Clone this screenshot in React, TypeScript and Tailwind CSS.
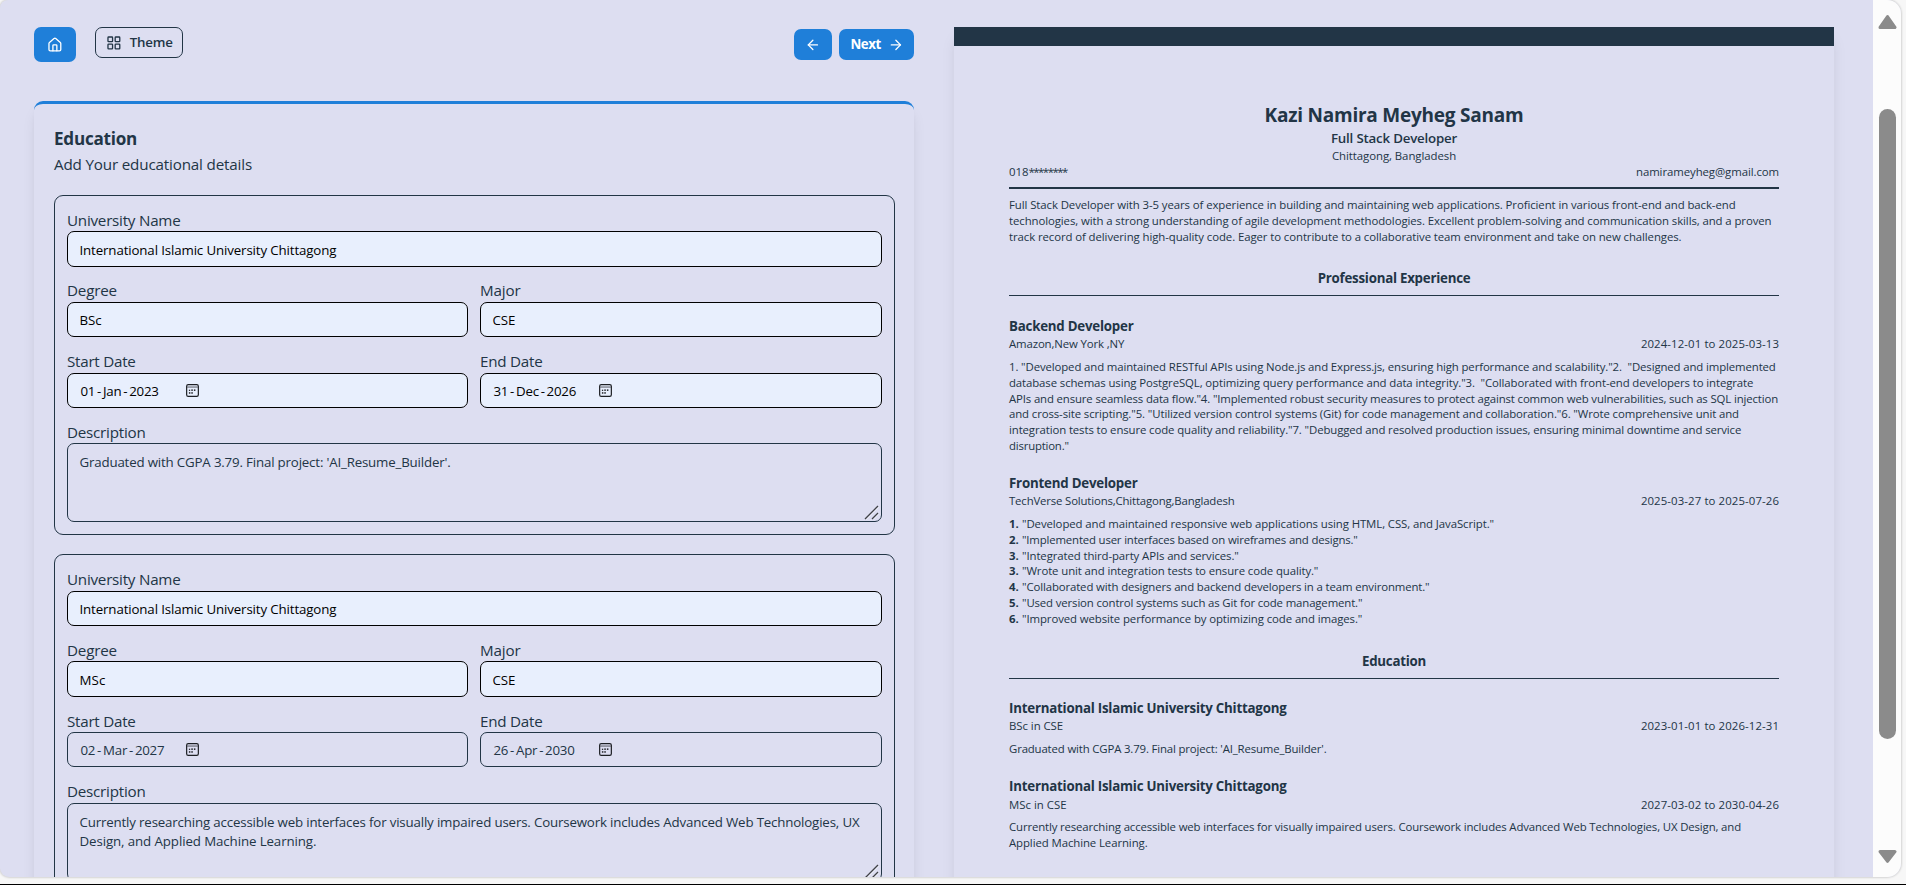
import type { ReactNode } from "react";
import { ArrowLeft, ArrowRight, House, LayoutGrid } from "lucide-react";

type Line = { text: string; tracking: string; number?: string };

type FieldValue = { text: string; tracking: string };

type DateValue = { day: string; month: string; year: string };

type EducationEntry = {
  university: FieldValue;
  degree: FieldValue;
  major: FieldValue;
  start: DateValue;
  end: DateValue;
  autofilledDates: boolean;
  description: Line[];
};

const university: FieldValue = {
  text: "International Islamic University Chittagong",
  tracking: "tracking-[-0.13px]",
};

const entries: EducationEntry[] = [
  {
    university,
    degree: { text: "BSc", tracking: "tracking-[-0.1px]" },
    major: { text: "CSE", tracking: "tracking-[-0.1px]" },
    start: { day: "01", month: "Jan", year: "2023" },
    end: { day: "31", month: "Dec", year: "2026" },
    autofilledDates: true,
    description: [
      {
        text: "Graduated with CGPA 3.79. Final project: 'AI_Resume_Builder'.",
        tracking: "tracking-[-0.175px]",
      },
    ],
  },
  {
    university,
    degree: { text: "MSc", tracking: "tracking-[0.1px]" },
    major: { text: "CSE", tracking: "tracking-[-0.1px]" },
    start: { day: "02", month: "Mar", year: "2027" },
    end: { day: "26", month: "Apr", year: "2030" },
    autofilledDates: false,
    description: [
      {
        text: "Currently researching accessible web interfaces for visually impaired users. Coursework includes Advanced Web Technologies, UX",
        tracking: "tracking-[-0.167px]",
      },
      { text: "Design, and Applied Machine Learning.", tracking: "tracking-[-0.1px]" },
    ],
  },
];

const summary: Line[] = [
  {
    text: "Full Stack Developer with 3-5 years of experience in building and maintaining web applications. Proficient in various front-end and back-end",
    tracking: "tracking-[-0.086px]",
  },
  {
    text: "technologies, with a strong understanding of agile development methodologies. Excellent problem-solving and communication skills, and a proven",
    tracking: "tracking-[-0.09px]",
  },
  {
    text: "track record of delivering high-quality code. Eager to contribute to a collaborative team environment and take on new challenges.",
    tracking: "tracking-[-0.088px]",
  },
];

const backendWork: Line[] = [
  {
    text: '1. "Developed and maintained RESTful APIs using Node.js and Express.js, ensuring high performance and scalability."2.  "Designed and implemented',
    tracking: "tracking-[-0.122px]",
  },
  {
    text: 'database schemas using PostgreSQL, optimizing query performance and data integrity."3.  "Collaborated with front-end developers to integrate',
    tracking: "tracking-[-0.107px]",
  },
  {
    text: 'APIs and ensure seamless data flow."4. "Implemented robust security measures to protect against common web vulnerabilities, such as SQL injection',
    tracking: "tracking-[-0.143px]",
  },
  {
    text: 'and cross-site scripting."5. "Utilized version control systems (Git) for code management and collaboration."6. "Wrote comprehensive unit and',
    tracking: "tracking-[-0.108px]",
  },
  {
    text: 'integration tests to ensure code quality and reliability."7. "Debugged and resolved production issues, ensuring minimal downtime and service',
    tracking: "tracking-[-0.111px]",
  },
  { text: 'disruption."', tracking: "tracking-[-0.2px]" },
];

const frontendWork: Line[] = [
  {
    number: "1.",
    text: '"Developed and maintained responsive web applications using HTML, CSS, and JavaScript."',
    tracking: "tracking-[-0.09px]",
  },
  {
    number: "2.",
    text: '"Implemented user interfaces based on wireframes and designs."',
    tracking: "tracking-[-0.173px]",
  },
  { number: "3.", text: '"Integrated third-party APIs and services."', tracking: "tracking-[-0.107px]" },
  {
    number: "3.",
    text: '"Wrote unit and integration tests to ensure code quality."',
    tracking: "tracking-[-0.103px]",
  },
  {
    number: "4.",
    text: '"Collaborated with designers and backend developers in a team environment."',
    tracking: "tracking-[-0.127px]",
  },
  {
    number: "5.",
    text: '"Used version control systems such as Git for code management."',
    tracking: "tracking-[-0.138px]",
  },
  {
    number: "6.",
    text: '"Improved website performance by optimizing code and images."',
    tracking: "tracking-[-0.094px]",
  },
];

function CalendarIcon() {
  return (
    <svg width="13" height="13" viewBox="0 0 13 13" fill="none" className="shrink-0">
      <rect x="0.65" y="0.65" width="11.7" height="11.7" rx="1.6" stroke="#1d1f24" strokeWidth="1.2" />
      <rect x="1.2" y="2.4" width="10.6" height="1.3" fill="#1d1f24" fillOpacity="0.55" />
      <g fill="#1d1f24">
        <rect x="5.3" y="5.4" width="1.5" height="1.5" />
        <rect x="7.9" y="5.4" width="1.5" height="1.5" />
        <rect x="2.9" y="5.7" width="1.3" height="1.2" />
        <rect x="2.9" y="8.2" width="1.5" height="1.5" />
        <rect x="5.3" y="8.2" width="1.5" height="1.5" />
      </g>
    </svg>
  );
}

function ResizeGrip() {
  return (
    <svg
      width="15"
      height="15"
      viewBox="0 0 15 15"
      fill="none"
      className="absolute right-0.5 bottom-px"
    >
      <path d="M2.2 14.4 14.6 2M9 14.4l5.6-5.6" stroke="#ffffff" strokeOpacity="0.7" strokeWidth="1" />
      <path d="M1 14 14 1M8 14l6-6" stroke="#3f4146" strokeWidth="1.3" />
    </svg>
  );
}

function Field({ label, tracking, children }: { label: string; tracking: string; children: ReactNode }) {
  return (
    <div>
      <div
        className={`flex h-[23.6px] items-center pt-[2px] text-[15.2px] leading-none whitespace-nowrap ${tracking}`}
      >
        {label}
      </div>
      {children}
    </div>
  );
}

function TextInput({ value }: { value: FieldValue }) {
  return (
    <div
      className={`flex h-[35.4px] items-center rounded-[7px] border border-black bg-[#e8effd] px-[11.5px] pt-[3px] text-[13.3px] leading-none whitespace-nowrap text-black ${value.tracking}`}
    >
      {value.text}
    </div>
  );
}

function DateInput({ value, autofilled }: { value: DateValue; autofilled: boolean }) {
  return (
    <div
      className={`flex h-[35.4px] items-center rounded-[7px] border px-[11px] text-[13.3px] leading-none ${
        autofilled ? "border-black bg-[#e8effd] text-black" : "border-[#223546]"
      }`}
    >
      <div className="flex w-[107px] pt-[2px] pl-[1.5px] tracking-[-0.25px]">
        <span>{value.day}</span>
        <span className="px-[1.9px]">-</span>
        <span>{value.month}</span>
        <span className="px-[1.9px]">-</span>
        <span>{value.year}</span>
      </div>
      <CalendarIcon />
    </div>
  );
}

function EntryForm({ entry }: { entry: EducationEntry }) {
  return (
    <div className="flex h-[339.95px] flex-col gap-[11.75px] rounded-[9px] border border-[#223546] px-[12px] pt-[11.7px]">
      <Field label="University Name" tracking="tracking-[-0.24px]">
        <TextInput value={entry.university} />
      </Field>
      <div className="grid grid-cols-[401px_402px] gap-x-3">
        <Field label="Degree" tracking="tracking-[-0.2px]">
          <TextInput value={entry.degree} />
        </Field>
        <Field label="Major" tracking="tracking-[-0.15px]">
          <TextInput value={entry.major} />
        </Field>
      </div>
      <div className="grid grid-cols-[401px_402px] gap-x-3">
        <Field label="Start Date" tracking="tracking-[-0.26px]">
          <DateInput value={entry.start} autofilled={entry.autofilledDates} />
        </Field>
        <Field label="End Date" tracking="tracking-[-0.23px]">
          <DateInput value={entry.end} autofilled={entry.autofilledDates} />
        </Field>
      </div>
      <Field label="Description" tracking="tracking-[-0.24px]">
        <div className="relative h-[78.7px] rounded-[7px] border border-[#223546] px-[11.5px] pt-[9px] text-[13.3px] leading-[19.3px]">
          {entry.description.map((line) => (
            <div key={line.text} className={`whitespace-pre ${line.tracking}`}>
              {line.text}
            </div>
          ))}
          <ResizeGrip />
        </div>
      </Field>
    </div>
  );
}

function Lines({ lines }: { lines: Line[] }) {
  return (
    <div className="leading-[15.83px]">
      {lines.map((line) => (
        <div key={line.text} className="flex whitespace-pre">
          {line.number && <span className="w-[13px] font-bold">{line.number}</span>}
          <span className={line.tracking}>{line.text}</span>
        </div>
      ))}
    </div>
  );
}

function SectionTitle({ title, spacing }: { title: string; spacing: string }) {
  return (
    <div className={`border-b border-[#223546] pb-[7px] text-center ${spacing}`}>
      <div className="h-5 text-[13.3px] leading-5 font-bold tracking-[-0.24px]">{title}</div>
    </div>
  );
}

function ResumeItem(props: {
  title: string;
  titleTracking: string;
  place: string;
  placeTracking: string;
  dates: string;
  spacing: string;
  lines: Line[];
}) {
  return (
    <div className={props.spacing}>
      <div className={`text-[13.3px] leading-[18px] font-bold whitespace-nowrap ${props.titleTracking}`}>
        {props.title}
      </div>
      <div className="mb-[6.4px] flex h-[17.6px] items-center justify-between leading-none whitespace-nowrap">
        <span className={props.placeTracking}>{props.place}</span>
        <span className="tracking-[0.1px]">{props.dates}</span>
      </div>
      <Lines lines={props.lines} />
    </div>
  );
}

function Scrollbar() {
  return (
    <div className="flex w-7 shrink-0 flex-col items-center bg-[#fcfcfc] pt-[15px] pb-[13px]">
      <svg width="19" height="15" viewBox="0 0 19 15" className="shrink-0">
        <path
          d="M9.5 1.6 17 12.4H2Z"
          fill="#8b8b8b"
          stroke="#8b8b8b"
          strokeWidth="3"
          strokeLinejoin="round"
        />
      </svg>
      <div className="mt-[79px] h-[630px] w-[17px] shrink-0 rounded-full bg-[#8b8b8b]" />
      <svg width="19" height="15" viewBox="0 0 19 15" className="mt-auto shrink-0">
        <path
          d="M9.5 12.4 17 2.6H2Z"
          fill="#8b8b8b"
          stroke="#8b8b8b"
          strokeWidth="3"
          strokeLinejoin="round"
        />
      </svg>
    </div>
  );
}

export default function App() {
  return (
    <div className="flex h-[885px] w-[1906px] flex-col overflow-hidden border-b border-black bg-[#f7f7f7] font-['Open_Sans',sans-serif] text-[#223546]">
      <div className="flex h-[877px] w-[1901px] shrink-0 overflow-hidden rounded-tl-[8px] rounded-tr-[14px] rounded-br-[14px] rounded-bl-[9px] bg-[#dddef1] shadow-[0_0_2px_1px_rgba(0,0,0,0.14)]">
        <main className="flex w-[1873px] shrink-0 gap-10 px-[34px] pt-[27px]">
          <section className="w-[880px] shrink-0">
            <div className="flex h-[74px] items-start">
              <button className="flex h-[35px] w-[42px] items-center justify-center rounded-[7px] bg-[#1f7fd9] text-white">
                <House size={15.75} strokeWidth={2} />
              </button>
              <button className="ml-[19px] flex h-[31px] w-[88px] items-center rounded-[7px] border border-[#223546] pl-[10px] text-[13.3px] font-semibold">
                <LayoutGrid size={15.75} strokeWidth={2} />
                <span className="ml-[8px] pt-px tracking-[-0.2px]">Theme</span>
              </button>
              <div className="mt-[2px] ml-auto flex gap-[7px]">
                <button className="flex h-[31px] w-[38px] items-center justify-center rounded-[7px] bg-[#1f7fd9] text-white">
                  <ArrowLeft size={15.75} strokeWidth={2} />
                </button>
                <button className="flex h-[31px] w-[75px] items-center rounded-[7px] bg-[#1f7fd9] pl-[11.5px] text-[13.3px] font-bold text-white">
                  <span className="w-[29.5px] pt-px tracking-[-0.45px]">Next</span>
                  <ArrowRight size={15.75} strokeWidth={2} className="ml-[8px]" />
                </button>
              </div>
            </div>

            <div className="h-[900px] rounded-[9px] border-t-[3px] border-[#1f7fd9] px-[20px] pt-[21.7px] shadow-lg">
              <h2 className="h-[25.5px] text-[17.1px] leading-[25.5px] font-bold tracking-[-0.245px]">
                Education
              </h2>
              <p className="h-[25.5px] pt-px text-[15.2px] leading-[25.5px] tracking-[-0.165px]">
                Add Your educational details
              </p>
              <div className="mt-[18.2px] flex w-[841px] flex-col gap-[19.45px]">
                {entries.map((entry) => (
                  <EntryForm key={entry.degree.text} entry={entry} />
                ))}
              </div>
            </div>
          </section>

          <section className="h-[1000px] w-[880px] shrink-0 border-t-[19px] border-[#223546] px-[55px] pt-[53.6px] text-[11.4px] shadow-lg">
            <h1 className="text-center text-[19px] leading-[30px] font-bold tracking-[-0.23px]">
              Kazi Namira Meyheg Sanam
            </h1>
            <div className="text-center text-[13.3px] leading-[17px] font-semibold tracking-[-0.2px]">
              Full Stack Developer
            </div>
            <div className="text-center leading-[18px] tracking-[-0.06px]">Chittagong, Bangladesh</div>
            <div className="flex h-[14px] items-center justify-between leading-none">
              <span>
                <span>018</span>
                <span className="tracking-[-1.5px]">********</span>
              </span>
              <span className="tracking-[-0.082px]">namirameyheg@gmail.com</span>
            </div>
            <div className="mt-[8.4px] mb-[8px] h-[2px] bg-[#223546]" />
            <Lines lines={summary} />

            <SectionTitle title="Professional Experience" spacing="mt-[23.7px]" />
            <ResumeItem
              title="Backend Developer"
              titleTracking="tracking-[-0.22px]"
              place="Amazon,New York ,NY"
              placeTracking="tracking-[-0.13px]"
              dates="2024-12-01 to 2025-03-13"
              spacing="mt-[20.8px]"
              lines={backendWork}
            />
            <ResumeItem
              title="Frontend Developer"
              titleTracking="tracking-[-0.21px]"
              place="TechVerse Solutions,Chittagong,Bangladesh"
              placeTracking="tracking-[-0.167px]"
              dates="2025-03-27 to 2025-07-26"
              spacing="mt-[20.1px]"
              lines={frontendWork}
            />

            <SectionTitle title="Education" spacing="mt-[24.2px]" />
            <ResumeItem
              title="International Islamic University Chittagong"
              titleTracking="tracking-[-0.223px]"
              place="BSc in CSE"
              placeTracking="tracking-[-0.05px]"
              dates="2023-01-01 to 2026-12-31"
              spacing="mt-[20.4px]"
              lines={[
                {
                  text: "Graduated with CGPA 3.79. Final project: 'AI_Resume_Builder'.",
                  tracking: "tracking-[-0.155px]",
                },
              ]}
            />
            <ResumeItem
              title="International Islamic University Chittagong"
              titleTracking="tracking-[-0.223px]"
              place="MSc in CSE"
              placeTracking="tracking-[0px]"
              dates="2027-03-02 to 2030-04-26"
              spacing="mt-[20.3px]"
              lines={[
                {
                  text: "Currently researching accessible web interfaces for visually impaired users. Coursework includes Advanced Web Technologies, UX Design, and",
                  tracking: "tracking-[-0.141px]",
                },
                { text: "Applied Machine Learning.", tracking: "tracking-[-0.09px]" },
              ]}
            />
          </section>
        </main>
        <Scrollbar />
      </div>
    </div>
  );
}
